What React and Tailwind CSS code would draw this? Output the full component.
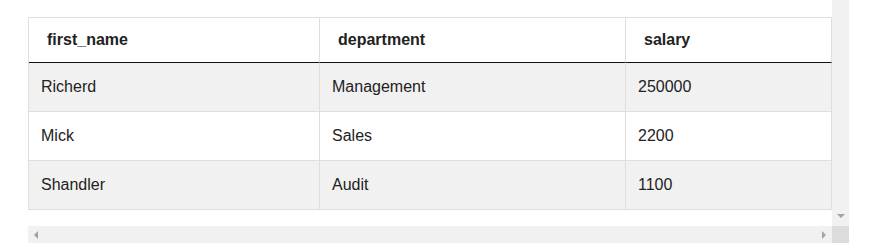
import React from "react";

const rows = [
  { first_name: "Richerd", department: "Management", salary: "250000" },
  { first_name: "Mick", department: "Sales", salary: "2200" },
  { first_name: "Shandler", department: "Audit", salary: "1100" },
];

const cols = ["first_name", "department", "salary"];

const App = () => {
  return (
    <div
      className="flex h-[251px] w-[875px] bg-white text-[#222]"
      style={{ fontFamily: '"Liberation Sans", Arial, sans-serif' }}
    >
      <div className="w-[28px] shrink-0" />
      <div className="flex flex-col">
        <div className="flex h-[226px]">
          {/* scroll area */}
          <div className="w-[804px] pt-[17px]">
            <div className="grid grid-cols-[291px_306px_206px] border-t border-l border-[#dedede]">
              {cols.map((c) => (
                <div
                  key={c}
                  className="flex h-[45px] items-center border-r border-b border-r-[#dedede] border-b-[#111] pl-[18px] text-base font-bold"
                >
                  {c}
                </div>
              ))}
              {rows.map((r, i) =>
                cols.map((c) => (
                  <div
                    key={i + c}
                    className={
                      "flex h-[49px] items-center border-r border-b border-[#dedede] pl-[12px] text-base " +
                      (i % 2 === 0 ? "bg-[#f1f1f1]" : "bg-white")
                    }
                  >
                    {r[c]}
                  </div>
                ))
              )}
            </div>
          </div>
          {/* vertical scrollbar */}
          <div className="flex w-[17px] flex-col justify-end items-center bg-[#f1f1f1] pb-[8px]">
            <div className="h-0 w-0 border-x-[4px] border-t-[4px] border-x-transparent border-t-[#a3a3a3]" />
          </div>
        </div>
        {/* horizontal scrollbar */}
        <div className="flex h-[17px]">
          <div className="flex w-[804px] items-center justify-between bg-[#f1f1f1] px-[6px]">
            <div className="h-0 w-0 border-y-[4px] border-r-[4px] border-y-transparent border-r-[#a3a3a3]" />
            <div className="h-0 w-0 border-y-[4px] border-l-[4px] border-y-transparent border-l-[#a3a3a3]" />
          </div>
          <div className="w-[17px] bg-[#dcdcdc]" />
        </div>
      </div>
    </div>
  );
};

export default App;
